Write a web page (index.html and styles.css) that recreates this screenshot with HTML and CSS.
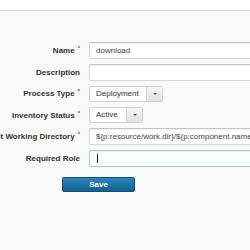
FILE: index.html
```html
<!DOCTYPE html>
<html lang="en">
<head>
<meta charset="UTF-8">
<title>Edit Process</title>
<link rel="stylesheet" href="styles.css">
</head>
<body>
<div class="topbar"></div>
<div class="content">
    <form class="process-form">
        <div class="row">
            <div class="label">Name <span class="req">*</span></div>
            <div class="field text">download</div>
        </div>
        <div class="row">
            <div class="label">Description</div>
            <div class="field text"></div>
        </div>
        <div class="row">
            <div class="label">Process Type <span class="req">*</span></div>
            <div class="select wide">
                <span class="sel-value">Deployment</span>
                <span class="sel-arrow"></span>
            </div>
        </div>
        <div class="row">
            <div class="label">Inventory Status <span class="req">*</span></div>
            <div class="select narrow">
                <span class="sel-value">Active</span>
                <span class="sel-arrow"></span>
            </div>
        </div>
        <div class="row">
            <div class="label">Default Working Directory <span class="req">*</span></div>
            <div class="field text">${p:resource/work.dir}/${p:component.name}</div>
        </div>
        <div class="row">
            <div class="label">Required Role</div>
            <div class="field text focus"><span class="caret"></span></div>
        </div>
        <div class="actions">
            <button type="button" class="save">Save</button>
        </div>
    </form>
</div>
</body>
</html>
```
FILE: styles.css
```css
body {
    margin: 0;
    padding: 0;
    font-family: "Liberation Sans", Arial, sans-serif;
    font-size: 8px;
    color: #333;
    background-color: #f9f9f9;
    overflow: hidden;
}
.topbar {
    height: 10px;
    background-color: #fff;
    border-bottom: 1px solid #dcdcdc;
}
.content {
    padding-top: 31px;
}
.process-form {
    display: flex;
    flex-direction: column;
    gap: 4.6px;
}
.row {
    display: flex;
    align-items: center;
    gap: 9px;
    height: 17px;
}
.label {
    width: 80px;
    flex: none;
    display: flex;
    justify-content: flex-end;
    white-space: nowrap;
    font-weight: bold;
    color: #333;
}
.req {
    color: #d22;
    font-size: 6px;
    margin-left: 3px;
    position: relative;
    top: -1px;
}
.field {
    flex: none;
    width: 200px;
    height: 17px;
    box-sizing: border-box;
    border: 1px solid #d6d6d6;
    border-top-color: #c4c4c4;
    background-color: #fff;
    box-shadow: inset 0 1px 1px rgba(0, 0, 0, 0.06);
    padding: 0 6px;
    line-height: 15px;
    white-space: nowrap;
    overflow: hidden;
    color: #444;
    border-radius: 2px 0 0 2px;
}
.field.focus {
    border-color: #9fcfe8;
}
.caret {
    display: inline-block;
    width: 1px;
    height: 9px;
    background-color: #222;
    vertical-align: middle;
    margin-left: 1px;
}
.select {
    flex: none;
    display: flex;
    height: 16px;
    box-sizing: border-box;
    border: 1px solid #d0d0d0;
    border-radius: 2px;
    background-color: #fff;
    overflow: hidden;
}
.select.wide {
    width: 74px;
}
.select.narrow {
    width: 54px;
}
.sel-value {
    flex: 1;
    padding-left: 6px;
    line-height: 14px;
    color: #333;
}
.sel-arrow {
    width: 15px;
    flex: none;
    border-left: 1px solid #d4d4d4;
    background: linear-gradient(#f6f6f6, #e2e2e2);
    display: flex;
    align-items: center;
    justify-content: center;
}
.sel-arrow::after {
    content: "";
    border-left: 2px solid transparent;
    border-right: 2px solid transparent;
    border-top: 2px solid #555;
}
.actions {
    padding-left: 62px;
    padding-top: 5px;
}
.save {
    width: 73px;
    height: 15px;
    padding: 0;
    border: 1px solid #0c4f7a;
    border-radius: 2px;
    background: linear-gradient(#2a86bd, #11608f);
    color: #fff;
    font-family: "Liberation Sans", Arial, sans-serif;
    font-size: 8px;
    font-weight: bold;
    cursor: pointer;
}
```
